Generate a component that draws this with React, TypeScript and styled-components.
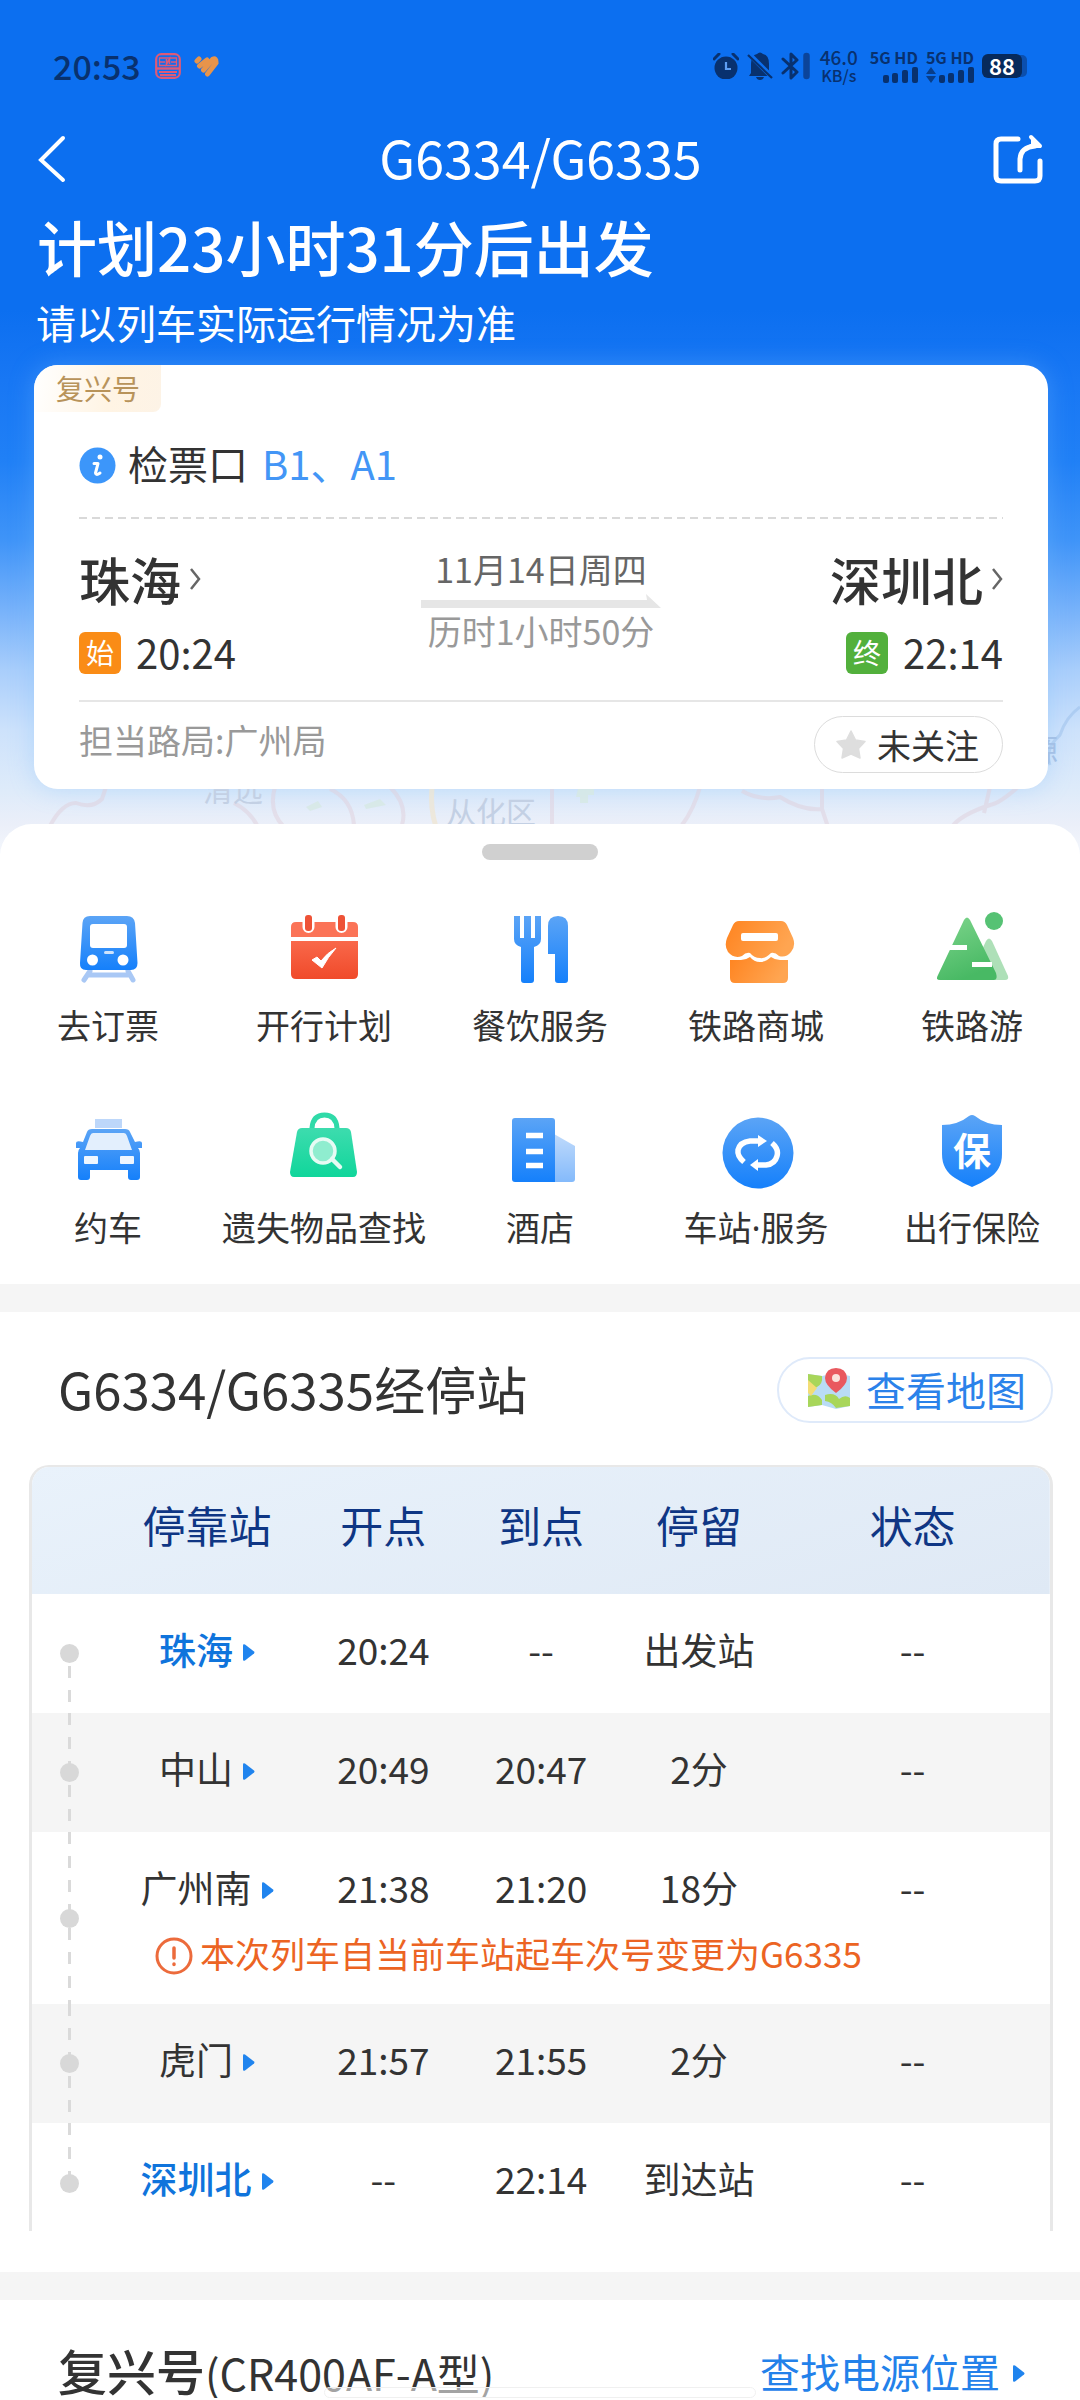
import React from "react";
import styled, { createGlobalStyle, css } from "styled-components";

const GlobalStyle = createGlobalStyle`
  * { box-sizing: border-box; }
  body {
    margin: 0;
    background: #ffffff;
    color: #333333;
    font-family: "Noto Sans CJK SC", "Noto Sans", sans-serif;
    font-size: 34px;
  }
  button { font: inherit; color: inherit; background: none; border: 0; padding: 0; cursor: pointer; }
  a { color: inherit; text-decoration: none; }
  h1, h2, p { margin: 0; font-weight: 400; }
  svg { display: block; flex: none; }
`;

const Page = styled.main`
  overflow: hidden;
`;

/* ---------- hero ---------- */

const Hero = styled.header`
  position: relative;
  padding: 50px 32px 65px 34px;
  color: #ffffff;
  background: linear-gradient(
    180deg,
    #0c6ff0 0,
    #0c6ff0 310px,
    #1877f4 380px,
    #2080f6 460px,
    #3f94f8 540px,
    #77b2fa 610px,
    #a9cefb 670px,
    #cde2fb 730px,
    #deebfa 790px,
    #ebeff9 825px,
    #f4f7fc 855px
  );
`;

const MapLayer = styled.svg`
  position: absolute;
  left: 0;
  bottom: 0;
  width: 100%;
  height: 255px;
`;

const StatusBar = styled.div`
  display: flex;
  align-items: center;
  height: 32px;
  padding: 0 20px 0 19px;
  color: #08316f;
`;

const Clock = styled.span`
  margin-right: 14px;
  font-size: 34px;
  line-height: 32px;
  font-weight: 500;
`;

const StatusRight = styled.div`
  display: flex;
  align-items: center;
  gap: 8px;
  margin-left: auto;
`;

const NetSpeed = styled.span`
  display: flex;
  flex-direction: column;
  align-items: center;
  margin: 0 4px 0 2px;
  font-size: 19px;
  line-height: 18px;
  font-weight: 500;
  small { font-size: 16px; }
`;

const Sim = styled.span`
  display: flex;
  flex-direction: column;
  align-items: flex-end;
  gap: 2px;
  font-size: 16px;
  line-height: 16px;
  font-weight: 700;
`;

const Battery = styled.span`
  width: 40px;
  height: 24px;
  margin-right: 6px;
  border-radius: 6px;
  background: #072a5c;
  box-shadow: 6px 0 0 -1px #0b4fae;
  color: #ffffff;
  font-size: 22px;
  line-height: 22px;
  font-weight: 700;
  text-align: center;
`;

const NavBar = styled.nav`
  display: grid;
  grid-template-columns: 60px 1fr 60px;
  align-items: center;
  height: 60px;
  margin: 47px 5px 0 4px;
  h1 { padding-bottom: 5px; font-size: 52px; line-height: 55px; text-align: center; }
  button:last-child { justify-self: end; }
`;

const Headline = styled.p`
  margin: 21px 3px 0;
  font-size: 60px;
  line-height: 72px;
  font-weight: 500;
`;

const Advice = styled.p`
  margin: 14px 2px 17px;
  font-size: 40px;
  line-height: 52px;
`;

/* ---------- trip card ---------- */

const Glow = styled.div`
  border-radius: 24px;
  box-shadow: 0 0 24px rgba(120, 185, 255, 0.35);
`;

const Card = styled.section`
  position: relative;
  overflow: hidden;
  border-radius: 24px;
  background: #ffffff;
  color: #333333;
`;

const TrainKind = styled.span`
  display: block;
  width: max-content;
  padding: 0 21px 0 22px;
  border-radius: 0 0 8px 0;
  background: linear-gradient(100deg, #ffffff, #fff4e4 60%, #fdf3e6);
  color: #b8935a;
  font-size: 28px;
  line-height: 47px;
`;

const CardBody = styled.div`
  padding: 27px 45px 16px;
`;

const GateRow = styled.div`
  display: flex;
  align-items: center;
  gap: 12px;
  padding-bottom: 30px;
  font-size: 40px;
  line-height: 48px;
  svg { margin-top: 4px; }
`;

const GateValue = styled.span`
  margin-left: 2px;
  color: #4396f6;
`;

const DashRule = styled.div`
  height: 2px;
  background: linear-gradient(90deg, #d9d9d9 65%, transparent 65%) 0 0 / 13px 2px round;
`;

const Route = styled.div`
  display: grid;
  grid-template-columns: 1fr 240px 1fr;
  padding: 28px 0 26px;
  border-bottom: 2px solid #e6e6e6;
`;

const End = styled.div<{ $right?: boolean }>`
  display: flex;
  flex-direction: column;
  align-items: ${(p) => (p.$right ? "flex-end" : "flex-start")};
  gap: 18px;
`;

const StationLink = styled.a`
  display: flex;
  align-items: center;
  gap: 8px;
  font-size: 51px;
  line-height: 64px;
  font-weight: 500;
`;

const TimeLine = styled.div`
  display: flex;
  align-items: center;
  gap: 15px;
  font-size: 40px;
  line-height: 44px;
`;

const Mark = styled.span<{ $color: string }>`
  width: 42px;
  height: 42px;
  margin-top: 3px;
  border-radius: 6px;
  background: ${(p) => p.$color};
  color: #ffffff;
  font-size: 28px;
  line-height: 40px;
  text-align: center;
`;

const Middle = styled.div`
  display: flex;
  flex-direction: column;
  align-items: center;
  color: #666666;
  line-height: 44px;
  white-space: nowrap;
  svg { margin: 3px 0 1px; }
`;

const Faint = styled.span`
  color: #999999;
`;

const CardFoot = styled.div`
  display: flex;
  align-items: flex-start;
  justify-content: space-between;
  margin-top: 14px;
  line-height: 48px;
`;

const FollowButton = styled.button`
  display: flex;
  align-items: center;
  gap: 10px;
  height: 57px;
  padding: 0 23px 0 20px;
  border: 1px solid #dcdcdc;
  border-radius: 29px;
  color: #333333;
`;

/* ---------- sheet ---------- */

const Sheet = styled.div`
  position: relative;
  margin-top: -30px;
  padding-top: 20px;
  border-radius: 32px 32px 0 0;
  background: #ffffff;
`;

const Handle = styled.div`
  width: 116px;
  height: 16px;
  margin: 0 auto;
  border-radius: 8px;
  background: #d0d0d0;
`;

const Services = styled.nav`
  display: grid;
  grid-template-columns: repeat(5, 1fr);
  row-gap: 64px;
  padding: 50px 0 34px;
`;

const Service = styled.a`
  display: flex;
  flex-direction: column;
  align-items: center;
  gap: 18px;
  font-family: "Noto Sans", "Noto Sans CJK SC", sans-serif;
  line-height: 44px;
  white-space: nowrap;
`;

const Divider = styled.div`
  height: 28px;
  background: #f5f5f5;
`;

const StopsSection = styled.section`
  padding: 45px 27px 41px 29px;
`;

const SectionHead = styled.div`
  display: flex;
  align-items: center;
  justify-content: space-between;
  padding-left: 29px;
  margin-bottom: 42px;
`;

const SectionTitle = styled.h2`
  padding-bottom: 4px;
  font-size: 51px;
  line-height: 60px;
`;

const MapButton = styled.button`
  display: flex;
  align-items: center;
  gap: 15px;
  height: 66px;
  padding: 0 25px 2px 28px;
  border: 2px solid #dfeafa;
  border-radius: 33px;
  color: #2b82ea;
  font-size: 40px;
`;

const TableFrame = styled.div`
  overflow: hidden;
  border: solid #e8e8e8;
  border-width: 2px 3px 0;
  border-radius: 20px 20px 0 0;
`;

const StopsTable = styled.table`
  width: 100%;
  table-layout: fixed;
  border-collapse: collapse;
  text-align: center;
  font-size: 37px;
  line-height: 44px;
  thead tr { background: linear-gradient(165deg, #e9f2fb, #dfe9f5); }
  th {
    padding: 32px 0 45px;
    color: #0f3684;
    font-size: 43px;
    line-height: 50px;
    font-weight: 400;
    vertical-align: top;
  }
  td { padding: 33px 0 42px; vertical-align: top; }
`;

const Column = styled.col<{ $width: string }>`
  width: ${(p) => p.$width};
`;

const StopRow = styled.tr<{ $shade?: boolean; $last?: boolean; $noted?: boolean }>`
  background: ${(p) => (p.$shade ? "#f5f5f5" : "#ffffff")};
  ${(p) => p.$last && css`td { padding-bottom: 31px; }`}
  ${(p) => p.$noted && css`td { padding-bottom: 22px; }`}
`;

const fromTop = "repeating-linear-gradient(180deg, #dadada 0 12px, transparent 12px 24px)";
const fromBottom = "repeating-linear-gradient(0deg, transparent 0 12px, #dadada 12px 24px)";

const TrackCell = styled.td<{ $part: "first" | "mid" | "last" }>`
  && {
    padding: ${(p) => (p.$part === "last" ? "12px 0 0" : "0")};
    vertical-align: middle;
    background-image: ${(p) => (p.$part === "first" ? fromBottom : fromTop)};
    background-repeat: no-repeat;
    background-position: center ${(p) => (p.$part === "first" ? "bottom" : "top")};
    background-size: 3px ${(p) => (p.$part === "mid" ? "100%" : "50%")};
  }
`;

const Dot = styled.span`
  display: block;
  width: 19px;
  height: 19px;
  margin: 0 auto;
  border-radius: 50%;
  background: #d8d8d8;
`;

const StopName = styled.a<{ $active?: boolean }>`
  display: inline-flex;
  align-items: center;
  gap: 9px;
  color: ${(p) => (p.$active ? "#0f74dc" : "#333333")};
  font-weight: ${(p) => (p.$active ? 500 : 400)};
  svg { margin-top: 6px; }
`;

const NoticeCell = styled.td`
  && {
    padding: 0 0 29px 48px;
    text-align: left;
    color: #ec6423;
    font-size: 35px;
  }
`;

const Notice = styled.span`
  display: flex;
  align-items: center;
  gap: 7px;
  white-space: nowrap;
  svg { margin-top: 6px; }
`;

const TrainSection = styled.section`
  display: flex;
  align-items: center;
  justify-content: space-between;
  padding: 46px 55px 2px 58px;
  line-height: 48px;
  h2 { font-size: 49px; line-height: 48px; font-weight: 500; }
  h2 small { font-size: 43px; font-weight: 400; }
`;

const PowerLink = styled.a`
  display: flex;
  align-items: center;
  gap: 12px;
  color: #2381ea;
  font-size: 40px;
  svg { margin-top: 4px; }
`;

const GestureBar = styled.div`
  position: fixed;
  left: 30%;
  right: 30%;
  bottom: 2px;
  height: 11px;
  border: 1px solid #f0f0f0;
  border-radius: 6px;
  background: rgba(255, 255, 255, 0.55);
`;

/* ---------- drawings ---------- */

const Blue = ({ id }: { id: string }) => (
  <linearGradient id={id} x1="0" y1="0" x2="0" y2="1">
    <stop offset="0" stopColor="#5ba4f6" />
    <stop offset="1" stopColor="#1580fb" />
  </linearGradient>
);

const Icon = ({ children }: { children: React.ReactNode }) => (
  <svg width="76" height="76" viewBox="0 0 76 76" overflow="visible" aria-hidden="true">
    {children}
  </svg>
);

const TrainIcon = () => (
  <Icon>
    <defs><Blue id="gTrain" /></defs>
    <path d="M20 61L14 70M58 61L63 70M18 65H60" fill="none" stroke="#a9c8f5" strokeWidth="5" strokeLinecap="round" />
    <path d="M20 6H57Q64 6 65 13L67.500 53Q67.500 60 61 60H16Q9.500 60 10 53L12.500 13Q13 6 20 6Z" fill="url(#gTrain)" />
    <rect x="20" y="14" width="37" height="24" rx="3" fill="#fff" />
    <rect x="34" y="41" width="10" height="3" rx="1.500" fill="#cfe3fc" />
    <circle cx="22.500" cy="50" r="5.500" fill="#fff" />
    <circle cx="53" cy="50" r="5.500" fill="#fff" />
  </Icon>
);

const CalendarIcon = () => (
  <Icon>
    <defs>
      <linearGradient id="gCal" x1="0" y1="0" x2="0" y2="1">
        <stop offset="0" stopColor="#f9684a" />
        <stop offset="1" stopColor="#f04a2a" />
      </linearGradient>
    </defs>
    <path d="M10 12H67Q72 12 72 17V27H5V17Q5 12 10 12Z" fill="#fb7357" />
    <path d="M5 31H72V64Q72 69 67 69H10Q5 69 5 64Z" fill="url(#gCal)" />
    <path d="M22.500 4V17M55.500 4V17" stroke="#fff" strokeWidth="12" strokeLinecap="round" />
    <rect x="19" y="5" width="7" height="16" rx="3" fill="#ee5236" />
    <rect x="52" y="5" width="7" height="16" rx="3" fill="#ee5236" />
    <path d="M26 50L31 47L35 51Q41 43 50 38Q42 47 36 58Z" fill="#fff" stroke="#fff" strokeWidth="1" strokeLinejoin="round" />
  </Icon>
);

const DiningIcon = () => (
  <Icon>
    <defs><Blue id="gDine" /></defs>
    <path d="M12 6H18V28H22V6H29V28H33V6H39V29Q39 35 32 37V70Q32 73 29 73H22Q19 73 19 70V37Q12 35 12 29Z" fill="url(#gDine)" />
    <path d="M46 16Q46 6 56 6Q66 6 66 16V70Q66 73 63 73H56Q53 73 53 70V44H46Z" fill="url(#gDine)" />
  </Icon>
);

const ShopIcon = () => (
  <Icon>
    <defs>
      <linearGradient id="gShop" x1="0" y1="0" x2="1" y2="0.300">
        <stop offset="0" stopColor="#ff8420" />
        <stop offset="1" stopColor="#ffa551" />
      </linearGradient>
    </defs>
    <path d="M21 11H63Q67 11 69 15L75 28Q78 36 73 42Q68 48 61 46Q57 42 53 43Q47 49 42 48Q36 48 32 43Q28 42 24 46Q16 49 10 42Q6 36 9 28L15 15Q17 11 21 11Z" fill="url(#gShop)" />
    <rect x="23" y="23" width="37" height="8" rx="2" fill="#fff" />
    <path d="M12 50H23Q28 50 32 47Q36 52 42 52Q48 52 53 47Q57 50 62 50H70V68Q70 73 65 73H17Q12 73 12 68Z" fill="url(#gShop)" />
  </Icon>
);

const MountainIcon = () => (
  <Icon>
    <defs>
      <linearGradient id="gMount" x1="0" y1="0" x2="0.400" y2="1">
        <stop offset="0" stopColor="#7ed58c" />
        <stop offset="1" stopColor="#48b964" />
      </linearGradient>
    </defs>
    <path d="M52 31Q55 26 58 31L74 66Q75 70 71 70H45V46Z" fill="#aee0b8" />
    <path d="M30 10Q33 5 36 10L62 63Q64 70 60 70H6Q1 70 4 65Z" fill="url(#gMount)" />
    <circle cx="60" cy="11" r="9" fill="#56c274" />
    <path d="M15 37.500H33M38 54.500H58" stroke="#fff" strokeWidth="5" />
  </Icon>
);

const TaxiIcon = () => (
  <Icon>
    <defs><Blue id="gTaxi" /></defs>
    <path d="M25 7H52V16H25Z" fill="#bdd7fa" />
    <path d="M22 17H55Q59 17 60 20L65 30Q72 28 72 31V36H68Q70 38 70 41V65Q70 68 67 68H61Q58 68 58 65V58H20V65Q20 68 17 68H11Q8 68 8 65V41Q8 38 10 36H6V31Q6 28 13 30L17 20Q18 17 22 17Z" fill="url(#gTaxi)" />
    <path d="M23 21H54Q56 21 57 24L62 38H15L20 24Q21 21 23 21Z" fill="#e3effd" />
    <rect x="14" y="44" width="14" height="8" rx="1" fill="#eef6ff" />
    <rect x="50" y="44" width="14" height="8" rx="1" fill="#eef6ff" />
  </Icon>
);

const BagIcon = () => (
  <Icon>
    <defs>
      <linearGradient id="gBag" x1="0" y1="0" x2="0" y2="1">
        <stop offset="0" stopColor="#3ddcae" />
        <stop offset="1" stopColor="#10d69b" />
      </linearGradient>
    </defs>
    <path d="M26 18V16Q27 3 38.500 3Q50 3 51 16V18" fill="none" stroke="#2fdaa8" strokeWidth="5" />
    <path d="M16 16H60Q64 16 65 20L71 60Q71 65 67 65H8Q4 65 4 60L11 20Q12 16 16 16Z" fill="url(#gBag)" />
    <circle cx="37" cy="39" r="12" fill="#8fedcf" stroke="#e7fbf4" strokeWidth="3.500" />
    <path d="M46 47L54 55" stroke="#e7fbf4" strokeWidth="4.500" strokeLinecap="round" />
  </Icon>
);

const HotelIcon = () => (
  <Icon>
    <defs>
      <Blue id="gHotel" />
      <linearGradient id="gWing" x1="0" y1="0" x2="0" y2="1">
        <stop offset="0" stopColor="#bfdafb" />
        <stop offset="1" stopColor="#84bafb" />
      </linearGradient>
    </defs>
    <path d="M52 22L73 34V67Q73 70 70 70H52Z" fill="url(#gWing)" />
    <path d="M13 6H50Q53 6 53 9V70H13Q10 70 10 67V9Q10 6 13 6Z" fill="url(#gHotel)" />
    <path d="M24 23.500H41M24 39.500H41M24 53.500H41" stroke="#fff" strokeWidth="5.500" />
  </Icon>
);

const StationIcon = () => (
  <Icon>
    <defs><Blue id="gStation" /></defs>
    <circle cx="40" cy="41" r="35.500" fill="url(#gStation)" />
    <path d="M26 50Q19 44 20 38Q22 30 32 29H42" fill="none" stroke="#fff" strokeWidth="5.500" />
    <path d="M40 23L49 29L40 35Z" fill="#fff" />
    <path d="M54 31Q61 37 59 44Q57 52 48 53H38" fill="none" stroke="#fff" strokeWidth="5.500" />
    <path d="M40 47L32 53L40 59Z" fill="#fff" />
  </Icon>
);

const ShieldIcon = () => (
  <Icon>
    <defs><Blue id="gShield" /></defs>
    <path d="M35 4Q38 2 41 4Q52 13 68 13V42Q68 58 55 66Q46 72 38 75Q30 72 21 66Q8 58 8 42V13Q24 13 35 4Z" fill="url(#gShield)" />
    <text x="38" y="53" fill="#fff" fontSize="38" fontWeight="700" textAnchor="middle">保</text>
  </Icon>
);

const Chevron = () => (
  <svg width="12" height="22" viewBox="0 0 12 22" fill="none" stroke="#666" strokeWidth="2.500" aria-hidden="true">
    <path d="M2 1L10 11L2 21" />
  </svg>
);

const Pointer = () => (
  <svg width="13" height="19" viewBox="0 0 13 18" aria-hidden="true">
    <path d="M1 2Q1 0 3 1L12 8Q13 9 12 10L3 17Q1 18 1 16Z" fill="#2084ee" />
  </svg>
);

const SignalBars = ({ arrows }: { arrows?: boolean }) => (
  <svg width="48" height="16" viewBox="0 0 48 16" fill="#08316f" aria-hidden="true">
    {arrows && <path d="M0 7L5 0L10 7ZM0 9H10L5 16Z" opacity="0.800" />}
    <rect x="13" y="8" width="6" height="8" rx="2" />
    <rect x="22" y="6" width="6" height="10" rx="2" />
    <rect x="32" y="3" width="6" height="13" rx="2" />
    <rect x="42" y="0" width="6" height="16" rx="2" />
  </svg>
);

const TrainBadge = () => (
  <svg width="26" height="26" viewBox="0 0 26 26" fill="none" stroke="#dd5a78" aria-hidden="true">
    <rect x="1.200" y="1.200" width="23.600" height="23.600" rx="5" strokeWidth="2.200" />
    <path d="M1 15.500H25" strokeWidth="2.400" />
    <path d="M4.500 5H21.500V12.500H4.500ZM4 9H10M16 9H22" strokeWidth="1.300" />
    <path d="M11.500 6V11L14.500 6V11" strokeWidth="1.600" />
    <path d="M4 19H22M5 22H21" strokeWidth="1.800" />
  </svg>
);

const HeartBadge = styled.svg`
  margin-left: 13px;
`;

const StatusIcons = () => (
  <>
    <svg width="26" height="26" viewBox="0 0 26 26" aria-hidden="true">
      <circle cx="13" cy="15" r="11.500" fill="#08316f" />
      <path d="M1 6L6 1M25 6L20 1" stroke="#08316f" strokeWidth="3" strokeLinecap="round" />
      <path d="M13 9V16H18" fill="none" stroke="#5d9df2" strokeWidth="2.200" />
    </svg>
    <svg width="26" height="28" viewBox="0 0 26 28" aria-hidden="true">
      <path d="M4 21V12Q4 3 10 2Q13 -1 16 2Q22 3 22 12V19L25 23V24H2Z M9 25H17Q16 28 13 28Q10 28 9 25Z" fill="#08316f" />
      <path d="M0 0L26 26" stroke="#0c6ff0" strokeWidth="5" />
      <path d="M1 3L25 26" stroke="#08316f" strokeWidth="2.200" />
    </svg>
    <svg width="29" height="28" viewBox="0 0 29 28" fill="none" stroke="#08316f" aria-hidden="true">
      <path d="M2 7L16 20L10 26V2L16 8L2 21" strokeWidth="3" strokeLinejoin="round" strokeLinecap="round" />
      <path d="M25.500 4V24" stroke="#0b449a" strokeWidth="6.500" strokeLinecap="round" />
    </svg>
  </>
);

const MapBackground = () => (
  <MapLayer viewBox="0 0 1080 255" preserveAspectRatio="none" aria-hidden="true">
    <g fill="none" strokeWidth="4" stroke="#dfd0dc" opacity="0.500">
      <path d="M50 227Q62 204 76 204Q92 210 102 200L106 188" />
      <path d="M234 204Q250 212 258 228M275 188Q268 212 284 228M330 190Q352 200 354 226M390 188Q408 206 402 226" />
      <path d="M552 186V228M700 188Q694 210 682 226M742 192Q760 202 780 198Q802 212 822 210L828 228M822 188V212" />
      <path d="M1018 188Q1000 204 990 206Q960 216 952 228M990 188L984 214" />
    </g>
    <path d="M432 188Q430 210 436 228" fill="none" stroke="#efe6d0" strokeWidth="5" opacity="0.700" />
    <path d="M1080 108Q1066 118 1060 136Q1044 150 1050 166" fill="none" stroke="#8fb6e6" strokeWidth="3" opacity="0.400" />
    <path d="M306 208L318 202L322 208L310 212ZM364 206L380 200L386 206L366 210ZM578 190H594V196H588V204H580V198H576Z" fill="#d6e8e3" opacity="0.800" />
    <g fill="#c3d0e4" fontSize="30">
      <text x="203" y="202">清远</text>
      <text x="446" y="224">从化区</text>
      <text x="998" y="162" fill="#a3c0e6">河源</text>
    </g>
  </MapLayer>
);

const services = [
  { label: "去订票", icon: <TrainIcon /> },
  { label: "开行计划", icon: <CalendarIcon /> },
  { label: "餐饮服务", icon: <DiningIcon /> },
  { label: "铁路商城", icon: <ShopIcon /> },
  { label: "铁路游", icon: <MountainIcon /> },
  { label: "约车", icon: <TaxiIcon /> },
  { label: "遗失物品查找", icon: <BagIcon /> },
  { label: "酒店", icon: <HotelIcon /> },
  { label: "车站·服务", icon: <StationIcon /> },
  { label: "出行保险", icon: <ShieldIcon /> },
];

type Stop = { name: string; depart: string; arrive: string; stay: string; status: string; active?: boolean; notice?: string };

const stops: Stop[] = [
  { name: "珠海", depart: "20:24", arrive: "--", stay: "出发站", status: "--", active: true },
  { name: "中山", depart: "20:49", arrive: "20:47", stay: "2分", status: "--" },
  { name: "广州南", depart: "21:38", arrive: "21:20", stay: "18分", status: "--", notice: "本次列车自当前车站起车次号变更为G6335" },
  { name: "虎门", depart: "21:57", arrive: "21:55", stay: "2分", status: "--" },
  { name: "深圳北", depart: "--", arrive: "22:14", stay: "到达站", status: "--", active: true },
];

export default function App() {
  return (
    <Page>
      <GlobalStyle />
      <Hero>
        <MapBackground />
        <StatusBar>
          <Clock>20:53</Clock>
          <TrainBadge />
          <HeartBadge width="25" height="22" viewBox="0 0 25 22" fill="none" stroke="#e8944a" strokeWidth="5" strokeLinecap="round" strokeLinejoin="round" aria-hidden="true">
            <path d="M3 6L5 4M5.500 11L13 5M9.500 15L19 4Q22 3 22 7M13.500 19L22 8" />
          </HeartBadge>
          <StatusRight>
            <StatusIcons />
            <NetSpeed>46.0<small>KB/s</small></NetSpeed>
            <Sim>5G HD<SignalBars /></Sim>
            <Sim>5G HD<SignalBars arrows /></Sim>
            <Battery>88</Battery>
          </StatusRight>
        </StatusBar>

        <NavBar>
          <button aria-label="返回">
            <svg width="28" height="48" viewBox="0 0 28 48" fill="none" stroke="#fff" strokeWidth="4" strokeLinecap="round">
              <path d="M25 3L3 25L25 45" />
            </svg>
          </button>
          <h1>G6334/G6335</h1>
          <button aria-label="分享">
            <svg width="50" height="50" viewBox="0 0 50 50" fill="none" stroke="#fff" strokeWidth="5" strokeLinecap="round" strokeLinejoin="round">
              <path d="M25 5H8Q3 5 3 10V42Q3 47 8 47H42Q47 47 47 42V27" />
              <path d="M27 36V25Q28 13 42 12" />
              <path d="M38 3L47 12H38" strokeWidth="4" fill="#fff" />
            </svg>
          </button>
        </NavBar>

        <Headline>计划23小时31分后出发</Headline>
        <Advice>请以列车实际运行情况为准</Advice>

        <Glow>
          <Card>
            <TrainKind>复兴号</TrainKind>
            <CardBody>
              <GateRow>
                <svg width="37" height="37" viewBox="0 0 37 37" aria-hidden="true">
                  <circle cx="18.500" cy="18.500" r="18" fill="#3c96fa" />
                  <circle cx="21" cy="10" r="2.500" fill="#fff" />
                  <path d="M15 16.500H19L16.500 26Q17 29 21 26" fill="none" stroke="#fff" strokeWidth="3" strokeLinecap="round" strokeLinejoin="round" />
                </svg>
                检票口<GateValue>B1、A1</GateValue>
              </GateRow>
              <DashRule />
              <Route>
                <End>
                  <StationLink href="#zhuhai">珠海<Chevron /></StationLink>
                  <TimeLine><Mark $color="#fa8c16">始</Mark>20:24</TimeLine>
                </End>
                <Middle>
                  <span>11月14日周四</span>
                  <svg width="240" height="14" viewBox="0 0 240 14" aria-hidden="true">
                    <path d="M0 6H226L225 0L240 14H0Z" fill="#e6e6e6" />
                  </svg>
                  <Faint>历时1小时50分</Faint>
                </Middle>
                <End $right>
                  <StationLink href="#shenzhenbei">深圳北<Chevron /></StationLink>
                  <TimeLine><Mark $color="#52b03c">终</Mark>22:14</TimeLine>
                </End>
              </Route>
              <CardFoot>
                <Faint>担当路局:广州局</Faint>
                <FollowButton>
                  <svg width="32" height="30" viewBox="0 0 32 30" aria-hidden="true">
                    <path d="M16 1L20.500 10L30 11.500L23.500 18.500L25 28L16 24L7 28L8.500 18.500L2 11.500L11.500 10Z" fill="#dedede" stroke="#dedede" strokeWidth="1.500" strokeLinejoin="round" />
                  </svg>
                  未关注
                </FollowButton>
              </CardFoot>
            </CardBody>
          </Card>
        </Glow>
      </Hero>

      <Sheet>
        <Handle />
        <Services>
          {services.map((s) => (
            <Service key={s.label} href="#service">{s.icon}{s.label}</Service>
          ))}
        </Services>

        <Divider />

        <StopsSection>
          <SectionHead>
            <SectionTitle>G6334/G6335经停站</SectionTitle>
            <MapButton>
              <svg width="44" height="42" viewBox="0 0 44 42" aria-hidden="true">
                <path d="M1 6L15 8L29 5L43 8V38L29 41L15 37L1 39Z" fill="#b9dcf5" />
                <path d="M1 6L15 8Q16 16 10 19Q6 22 1 20ZM1 28Q10 24 15 32V37L1 39ZM18 27Q28 24 32 31Q38 26 43 30V38L29 40Q25 34 18 33Z" fill="#a8d65a" />
                <path d="M1 12L10 20L4 28L1 25Z" fill="#f3dd75" />
                <path d="M29 25Q18 17 18 10Q19 0 29 0Q39 0 40 10Q40 17 29 25Z" fill="#e9595f" />
                <circle cx="29" cy="10" r="4" fill="#fbe3dc" />
              </svg>
              查看地图
            </MapButton>
          </SectionHead>

          <TableFrame>
            <StopsTable>
              <colgroup>
                <Column $width="75px" />
                <Column $width="200px" />
                <Column $width="15%" />
                <Column $width="16%" />
                <Column $width="15%" />
                <Column $width="auto" />
              </colgroup>
              <thead>
                <tr>
                  <th aria-label="行程" />
                  <th>停靠站</th>
                  <th>开点</th>
                  <th>到点</th>
                  <th>停留</th>
                  <th>状态</th>
                </tr>
              </thead>
              <tbody>
                {stops.map((s, i) => {
                  const last = i === stops.length - 1;
                  return (
                    <React.Fragment key={s.name}>
                      <StopRow $shade={i % 2 === 1} $last={last} $noted={!!s.notice}>
                        <TrackCell $part={i === 0 ? "first" : last ? "last" : "mid"} rowSpan={s.notice ? 2 : 1}>
                          <Dot />
                        </TrackCell>
                        <td><StopName href="#stop" $active={s.active}>{s.name}<Pointer /></StopName></td>
                        <td>{s.depart}</td>
                        <td>{s.arrive}</td>
                        <td>{s.stay}</td>
                        <td>{s.status}</td>
                      </StopRow>
                      {s.notice && (
                        <tr>
                          <NoticeCell colSpan={5}>
                            <Notice>
                              <svg width="38" height="38" viewBox="0 0 38 38" fill="none" stroke="#ec6b3c" strokeWidth="3" strokeLinecap="round" aria-hidden="true">
                                <circle cx="19" cy="19" r="17" />
                                <path d="M19 11V21M19 27V27.500" strokeWidth="3.500" />
                              </svg>
                              {s.notice}
                            </Notice>
                          </NoticeCell>
                        </tr>
                      )}
                    </React.Fragment>
                  );
                })}
              </tbody>
            </StopsTable>
          </TableFrame>
        </StopsSection>

        <Divider />

        <TrainSection>
          <h2>复兴号<small>(CR400AF-A型)</small></h2>
          <PowerLink href="#power">查找电源位置<Pointer /></PowerLink>
        </TrainSection>
      </Sheet>
      <GestureBar />
    </Page>
  );
}
